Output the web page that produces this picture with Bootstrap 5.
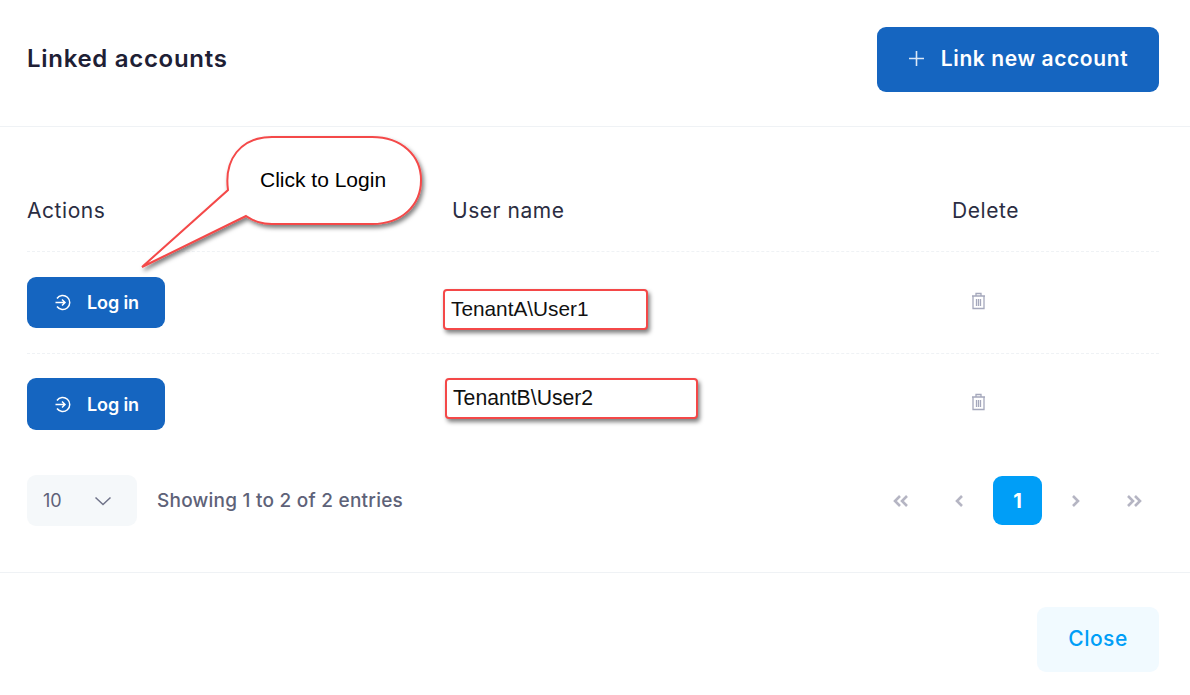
<!DOCTYPE html>
<html lang="en">
<head>
<meta charset="utf-8">
<title>Linked accounts</title>
<link href="https://cdn.jsdelivr.net/npm/bootstrap@5.3.0/dist/css/bootstrap.min.css" rel="stylesheet">
<style>
html,body{height:695px;overflow:hidden;background:#fff}
body{font-family:"Inter","Liberation Sans",sans-serif;color:#181c32}
.la-head{height:127px;padding:27px 31px 0 27px;border-bottom:1px solid #eff2f5}
.la-title{font-size:24px;font-weight:600;line-height:64px;margin:0;color:#1e2035;letter-spacing:.7px}
.la-primary{background:#1565c0;color:#fff;border:0;border-radius:9px;font-weight:600}
.la-primary:hover{background:#1565c0;color:#fff}
.la-link{width:282px;height:65px;font-size:21px;letter-spacing:.6px;padding-bottom:2px!important}
.la-body{padding:0 31px 0 27px;height:446px;border-bottom:1px solid #eff2f5}
.la-table{height:328px}
.la-cell-a{width:425px}
.la-cell-b{width:500px}
.la-hrow{height:125px;border-bottom:1px dashed #eff2f5;font-size:21px;color:#2b2d42;padding-top:70px;line-height:28px;letter-spacing:.55px}
.la-row{height:102px;border-bottom:1px dashed #eff2f5}
.la-row-last{border-bottom:0}
.la-cell-pad{padding-top:25px}
.la-cell-pad2{padding-top:24px}
.la-login{width:138px;height:51px;font-size:18px;letter-spacing:-.1px;padding-left:1px!important}
.la-login-tall{height:52px}
.la-mark{border:2px solid #f44848;border-radius:4px;background:#fff;box-shadow:2px 3px 4px rgba(0,0,0,.5);font:20.8px/1 "Liberation Sans",sans-serif;color:#111;display:flex;align-items:center;padding:0 0 0 6px;height:41px;margin-left:-9px}
.la-m1{width:205px;margin-top:37px}
.la-m2{width:253px;margin-top:24px;margin-left:-7px;padding-bottom:2px;font-size:21.2px}
.la-trash{margin-left:19px;margin-top:40px;display:block}
.la-trash2{margin-top:39px}
.la-pager{padding-top:20px;height:118px}
.la-size{width:110px;height:51px;background:#f5f8fa;border-radius:9px;padding:0 25px 0 16px;font-size:18px;color:#5e6278}
.la-info{font-size:19px;font-weight:500;color:#5e6278;margin-left:20px;padding-top:2px;letter-spacing:.24px}
.la-pagebox{padding-top:1px;margin-right:1px}
.la-pg{width:49px;height:49px;margin-left:9px;border-radius:9px}
.la-pg-first{padding-right:2px}
.la-pg-on{background:#009ef7;color:#fff;font-weight:700;font-size:20px}
.la-foot{padding:34px 31px 0 0}
.la-close{width:122px;height:65px;background:#f1faff;color:#009ef7;font-size:21px;font-weight:500;border:0;border-radius:9px;letter-spacing:.5px;padding-bottom:2px!important}
.la-close:hover{background:#f1faff;color:#009ef7}
.la-bubble{position:absolute;left:130px;top:128px;width:300px;height:150px;overflow:visible}
.la-bubble-text{position:absolute;left:260px;top:169px;font:21px/22px "Liberation Sans",sans-serif;color:#000}
</style>
</head>
<body>
<div class="d-flex justify-content-between la-head">
  <h1 class="la-title">Linked accounts</h1>
  <button class="btn la-primary la-link d-flex align-items-center justify-content-center gap-3 p-0">
    <svg width="17" height="17" viewBox="0 0 17 17" fill="none" stroke="#dbe7f6" stroke-width="1.6"><path d="M8.5 1v15M1 8.500h15"/></svg>Link new account
  </button>
</div>
<div class="la-body">
  <div class="la-table">
    <div class="d-flex la-hrow"><div class="la-cell-a">Actions</div><div class="la-cell-b">User name</div><div>Delete</div></div>
    <div class="d-flex la-row">
      <div class="la-cell-a la-cell-pad"><button class="btn la-primary la-login d-flex align-items-center justify-content-center gap-3 p-0"><svg width="17" height="17" viewBox="0 0 17 17" fill="none" stroke="#fff" stroke-width="1.5"><path d="M3 4.500A7 7 0 1 1 3 12.500M1.500 8.500H11M8 5.500l3 3-3 3"/></svg>Log in</button></div>
      <div class="la-cell-b"><div class="la-mark la-m1">TenantA\User1</div></div>
      <div><svg class="la-trash" width="15" height="18" viewBox="0 0 15 18" fill="none" stroke="#a5a8bc" stroke-width="1.300"><path d="M1 4h13M5 4V1.500h5V4M2 4v12.500h11V4M5.500 7v7M7.500 7v7M9.500 7v7"/></svg></div>
    </div>
    <div class="d-flex la-row la-row-last">
      <div class="la-cell-a la-cell-pad2"><button class="btn la-primary la-login la-login-tall d-flex align-items-center justify-content-center gap-3 p-0"><svg width="17" height="17" viewBox="0 0 17 17" fill="none" stroke="#fff" stroke-width="1.5"><path d="M3 4.500A7 7 0 1 1 3 12.500M1.500 8.500H11M8 5.500l3 3-3 3"/></svg>Log in</button></div>
      <div class="la-cell-b"><div class="la-mark la-m2">TenantB\User2</div></div>
      <div><svg class="la-trash la-trash2" width="15" height="18" viewBox="0 0 15 18" fill="none" stroke="#a5a8bc" stroke-width="1.300"><path d="M1 4h13M5 4V1.500h5V4M2 4v12.500h11V4M5.500 7v7M7.500 7v7M9.500 7v7"/></svg></div>
    </div>
  </div>
  <div class="d-flex align-items-start justify-content-between la-pager">
    <div class="d-flex align-items-center">
      <div class="la-size d-flex align-items-center justify-content-between"><span>10</span><svg width="18" height="10" viewBox="0 0 18 10" fill="none" stroke="#6f7389" stroke-width="1.500"><path d="M1.500 1.500 9 8.500l7.500-7"/></svg></div>
      <div class="la-info">Showing 1 to 2 of 2 entries</div>
    </div>
    <div class="d-flex la-pagebox align-items-center">
      <div class="la-pg la-pg-first d-flex align-items-center justify-content-center"><svg width="16" height="12" viewBox="0 0 16 12" fill="none" stroke="#b5b5c3" stroke-width="2.600"><path d="M7 1 2 6l5 5M14 1 9 6l5 5"/></svg></div>
      <div class="la-pg d-flex align-items-center justify-content-center"><svg width="9" height="12" viewBox="0 0 9 12" fill="none" stroke="#b5b5c3" stroke-width="2.600"><path d="M7 1 2 6l5 5"/></svg></div>
      <div class="la-pg la-pg-on d-flex align-items-center justify-content-center">1</div>
      <div class="la-pg d-flex align-items-center justify-content-center"><svg width="9" height="12" viewBox="0 0 9 12" fill="none" stroke="#b5b5c3" stroke-width="2.600"><path d="m2 1 5 5-5 5"/></svg></div>
      <div class="la-pg d-flex align-items-center justify-content-center"><svg width="16" height="12" viewBox="0 0 16 12" fill="none" stroke="#b5b5c3" stroke-width="2.600"><path d="m2 1 5 5-5 5M9 1l5 5-5 5"/></svg></div>
    </div>
  </div>
</div>
<div class="d-flex justify-content-end la-foot"><button class="btn la-close p-0">Close</button></div>
<svg class="la-bubble" viewBox="130 128 300 150" aria-hidden="true">
  <defs><filter id="sh" x="-20%" y="-20%" width="140%" height="140%"><feDropShadow dx="2" dy="3" stdDeviation="2" flood-color="#000" flood-opacity=".5"/></filter></defs>
  <path filter="url(#sh)" d="M228 190C224 160 240 137 272 137H372C402 137 421 156 421 180C421 205 402 224 372 224H272C262 224 253 221 246 216L142 267Z" fill="#fff" stroke="#f44848" stroke-width="2" stroke-linejoin="miter"/>
</svg>
<div class="la-bubble-text">Click to Login</div>
</body>
</html>
